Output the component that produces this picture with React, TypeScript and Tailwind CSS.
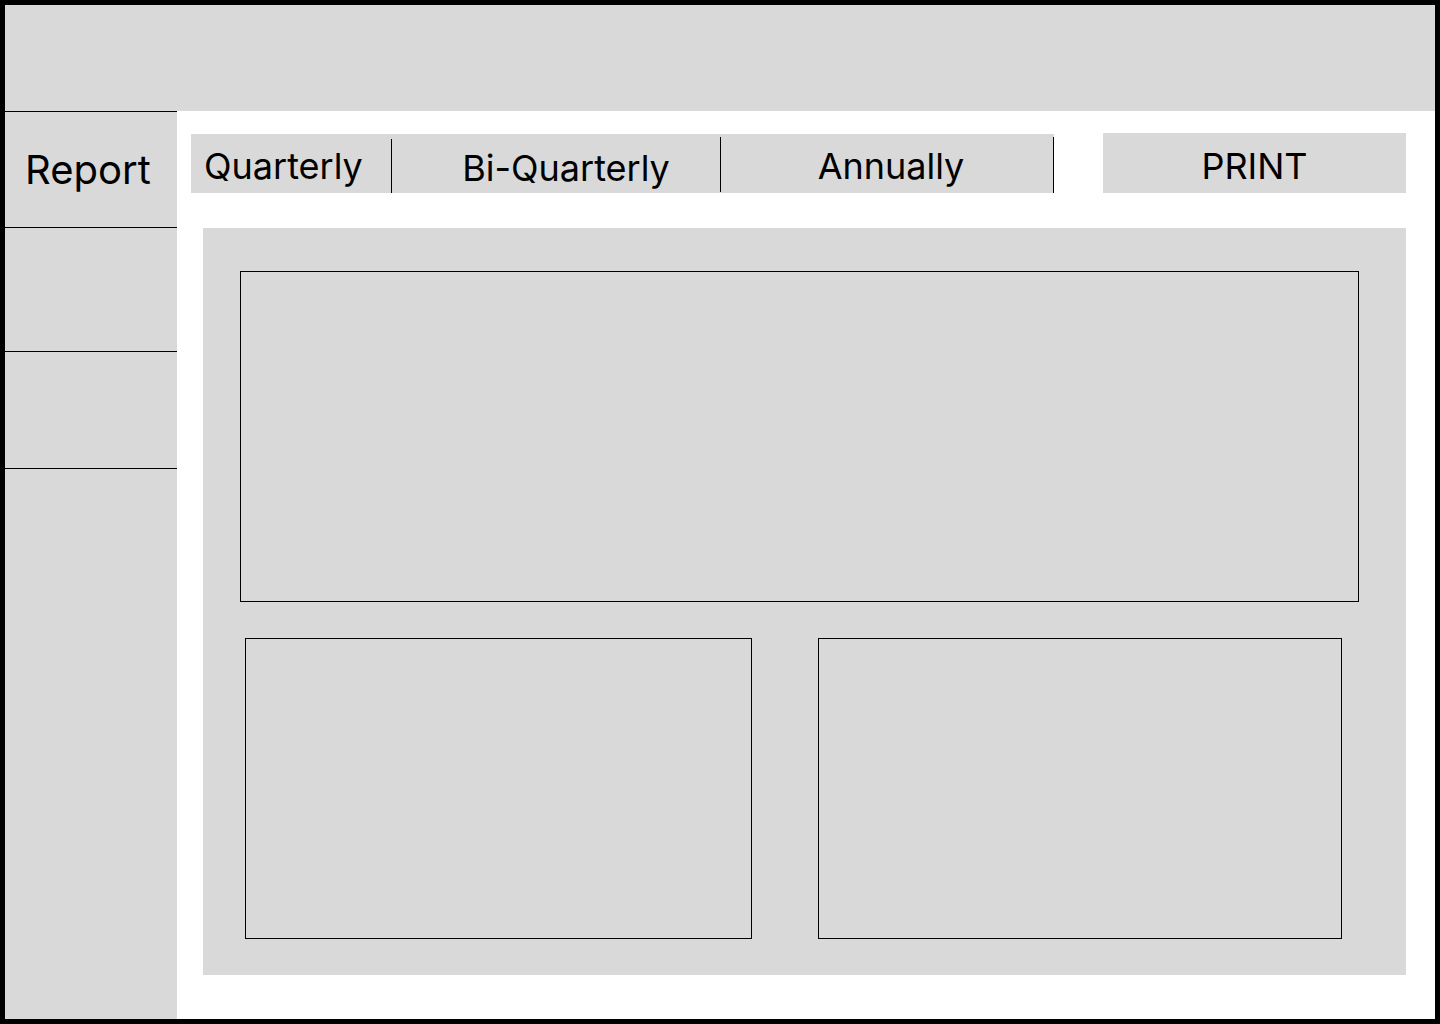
import React from "react";

export default function App() {
  const font = { fontFamily: "Inter, 'Noto Sans', sans-serif" };
  return (
    <div
      className="w-[1440px] h-[1024px] border-[5px] border-black bg-white flex flex-col overflow-hidden text-black"
      style={font}
    >
      <div className="h-[106px] shrink-0 bg-[#d9d9d9]" />
      <div className="flex flex-1 min-h-0">
        <aside className="w-[172px] shrink-0 bg-[#d9d9d9] flex flex-col">
          <div className="h-[117px] border-t border-b border-black flex items-center pl-[20px] text-[40px] leading-none">
            Report
          </div>
          <div className="h-[124px] border-b border-black" />
          <div className="h-[117px] border-b border-black" />
        </aside>
        <main className="flex-1 flex flex-col">
          <div className="flex items-end mt-[22px] ml-[14px]">
            <div className="flex h-[59px] bg-[#d9d9d9] text-[36px] leading-none">
              <div className="w-[200px] flex items-center pl-[13px] pt-[5px]">Quarterly</div>
              <div className="w-[1px] h-[54px] self-end bg-black" />
              <div className="w-[328px] flex items-center justify-center pl-[20px] pt-[8px]">Bi-Quarterly</div>
              <div className="w-[1px] h-[55px] self-start mt-[3px] bg-black" />
              <div className="w-[332px] flex items-center justify-center pl-[8px] pt-[5px]">Annually</div>
              <div className="w-[1px] h-[56px] self-end bg-black" />
            </div>
            <div className="ml-[49px] w-[303px] h-[60px] bg-[#d9d9d9] flex items-center justify-center text-[36px] leading-none pt-[5px]">
              PRINT
            </div>
          </div>
          <div className="mt-[35px] ml-[26px] w-[1203px] h-[747px] bg-[#d9d9d9] flex flex-col">
            <div className="mt-[43px] ml-[37px] w-[1119px] h-[331px] border border-black" />
            <div className="mt-[36px] ml-[42px] flex gap-[66px]">
              <div className="w-[507px] h-[301px] border border-black" />
              <div className="w-[524px] h-[301px] border border-black" />
            </div>
          </div>
        </main>
      </div>
    </div>
  );
}
